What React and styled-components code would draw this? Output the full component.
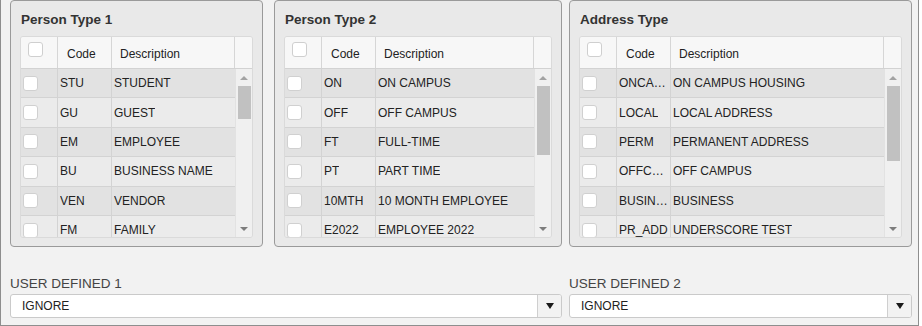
import styled, { createGlobalStyle } from 'styled-components';

const GlobalStyle = createGlobalStyle`
  html, body {
    margin: 0;
    padding: 0;
    background: #ffffff;
  }
  body {
    font-family: "Liberation Sans", Arial, sans-serif;
    color: #222;
  }
  * {
    box-sizing: border-box;
  }
`;

const panels = [
  {
    title: 'Person Type 1',
    width: 253,
    thumb: 33,
    rows: [
      ['STU', 'STUDENT'],
      ['GU', 'GUEST'],
      ['EM', 'EMPLOYEE'],
      ['BU', 'BUSINESS NAME'],
      ['VEN', 'VENDOR'],
      ['FM', 'FAMILY'],
    ],
  },
  {
    title: 'Person Type 2',
    width: 288,
    thumb: 69,
    rows: [
      ['ON', 'ON CAMPUS'],
      ['OFF', 'OFF CAMPUS'],
      ['FT', 'FULL-TIME'],
      ['PT', 'PART TIME'],
      ['10MTH', '10 MONTH EMPLOYEE'],
      ['E2022', 'EMPLOYEE 2022'],
    ],
  },
  {
    title: 'Address Type',
    width: 343,
    thumb: 75,
    rows: [
      ['ONCAMPUS', 'ON CAMPUS HOUSING'],
      ['LOCAL', 'LOCAL ADDRESS'],
      ['PERM', 'PERMANENT ADDRESS'],
      ['OFFCAMPUS', 'OFF CAMPUS'],
      ['BUSINESS', 'BUSINESS'],
      ['PR_ADD', 'UNDERSCORE TEST'],
    ],
  },
];

function CodeGrid({ rows, thumb }) {
  return (
    <Grid>
      <HeaderRow>
        <HeadCell>
          <HeadCheck />
        </HeadCell>
        <HeadCell $pad={9}>Code</HeadCell>
        <HeadCell $pad={8}>Description</HeadCell>
        <HeadCell $last />
      </HeaderRow>
      <Body>
        <Rows>
          {rows.map(([code, desc], i) => (
            <Row key={code} $odd={i % 2 === 0}>
              <Cell>
                <Check />
              </Cell>
              <Cell>
                <Ellipsis>{code}</Ellipsis>
              </Cell>
              <Cell $last>
                <Ellipsis>{desc}</Ellipsis>
              </Cell>
            </Row>
          ))}
        </Rows>
        <Track>
          <ArrowBox>
            <Arrow $up />
          </ArrowBox>
          <Thumb style={{ height: thumb }} />
          <Spacer />
          <ArrowBox>
            <Arrow />
          </ArrowBox>
        </Track>
      </Body>
    </Grid>
  );
}

function SelectField({ label }) {
  return (
    <Field>
      <Label>{label}</Label>
      <Select>
        <SelectText>IGNORE</SelectText>
        <SelectButton>
          <Caret />
        </SelectButton>
      </Select>
    </Field>
  );
}

export default function App() {
  return (
    <>
      <GlobalStyle />
      <Page>
        <PanelPair>
          {panels.slice(0, 2).map(p => (
            <Panel key={p.title} $width={p.width}>
              <Title>{p.title}</Title>
              <CodeGrid rows={p.rows} thumb={p.thumb} />
            </Panel>
          ))}
        </PanelPair>
        <Panel $width={panels[2].width}>
          <Title>{panels[2].title}</Title>
          <CodeGrid rows={panels[2].rows} thumb={panels[2].thumb} />
        </Panel>
        <SelectField label="USER DEFINED 1" />
        <SelectField label="USER DEFINED 2" />
      </Page>
    </>
  );
}

const Page = styled.div`
  width: 919px;
  height: 326px;
  display: grid;
  grid-template-columns: 552px 343px;
  grid-template-rows: 247px 1fr;
  column-gap: 7px;
  padding: 0 6px 7px 9px;
  background: #f2f2f2;
  border: 1px solid #8e8e8e;
  border-top: none;
`;

const PanelPair = styled.div`
  display: flex;
  justify-content: space-between;
`;

const Panel = styled.section`
  width: ${p => p.$width}px;
  height: 247px;
  display: flex;
  flex-direction: column;
  padding: 0 9px;
  background: #e9e9e9;
  border: 1px solid #9a9a9a;
  border-radius: 4px;
`;

const Title = styled.h2`
  margin: 0 0 8px;
  padding: 11px 0 0 1px;
  font-size: 13.5px;
  line-height: 16px;
  font-weight: bold;
  color: #333;
`;

const Grid = styled.div`
  height: 202px;
  display: flex;
  flex-direction: column;
  border: 1px solid #dadada;
  border-radius: 3px;
  overflow: hidden;
  background: #ebebeb;
`;

const HeaderRow = styled.div`
  display: grid;
  grid-template-columns: 37px 54px 1fr 17px;
  height: 32px;
  flex: none;
  background: #f7f7f7;
  border-bottom: 1px solid #d2d2d2;
`;

const HeadCell = styled.div`
  display: flex;
  align-items: center;
  padding: 3px 0 0 ${p => p.$pad || 0}px;
  font-size: 12px;
  color: #222;
  border-right: ${p => (p.$last ? 'none' : '1px solid #d6d6d6')};
`;

const HeadCheck = styled.span`
  align-self: flex-start;
  margin: 2px 0 0 7px;
  width: 15px;
  height: 15px;
  background: #fff;
  border: 1px solid #cfcfcf;
  border-radius: 3px;
`;

const Body = styled.div`
  flex: 1;
  display: flex;
  min-height: 0;
`;

const Rows = styled.div`
  flex: 1;
  min-width: 0;
  overflow: hidden;
`;

const Row = styled.div`
  display: grid;
  grid-template-columns: 37px 54px 1fr;
  height: 29.4px;
  background: ${p => (p.$odd ? '#e2e2e2' : '#ebebeb')};
  border-bottom: 1px solid #d3d3d3;
`;

const Cell = styled.div`
  display: flex;
  align-items: center;
  min-width: 0;
  padding-left: 2px;
  font-size: 12px;
  color: #222;
  border-right: ${p => (p.$last ? 'none' : '1px solid #d3d3d3')};
`;

const Ellipsis = styled.span`
  white-space: nowrap;
  overflow: hidden;
  text-overflow: ellipsis;
`;

const Check = styled.span`
  width: 15px;
  height: 15px;
  background: #fff;
  border: 1px solid #d0d0d0;
  border-radius: 3px;
`;

const Track = styled.div`
  width: 17px;
  flex: none;
  display: flex;
  flex-direction: column;
  align-items: center;
  background: #f0f0f0;
  border-left: 1px solid #e2e2e2;
`;

const ArrowBox = styled.div`
  height: 17px;
  width: 100%;
  display: flex;
  align-items: center;
  justify-content: center;
`;

const Arrow = styled.span`
  width: 0;
  height: 0;
  border-left: 4px solid transparent;
  border-right: 4px solid transparent;
  ${p =>
    p.$up
      ? 'border-bottom: 4px solid #a3a3a3;'
      : 'border-top: 4px solid #7d7d7d;'}
`;

const Thumb = styled.div`
  width: 13px;
  background: #c1c1c1;
`;

const Spacer = styled.div`
  flex: 1;
`;

const Field = styled.div`
  display: flex;
  flex-direction: column;
  justify-content: flex-end;
`;

const Label = styled.label`
  font-size: 13.5px;
  line-height: 15px;
  color: #444;
  margin-bottom: 3px;
`;

const Select = styled.div`
  height: 24px;
  display: flex;
  background: #fff;
  border: 1px solid #cacaca;
  border-radius: 3px;
  overflow: hidden;
`;

const SelectText = styled.span`
  flex: 1;
  display: flex;
  align-items: center;
  padding-left: 11px;
  font-size: 12px;
  color: #222;
`;

const SelectButton = styled.span`
  width: 24px;
  display: flex;
  align-items: center;
  justify-content: center;
  background: #f2f2f2;
  border-left: 1px solid #cfcfcf;
`;

const Caret = styled.span`
  width: 0;
  height: 0;
  border-left: 4px solid transparent;
  border-right: 4px solid transparent;
  border-top: 6px solid #1a1a1a;
`;
